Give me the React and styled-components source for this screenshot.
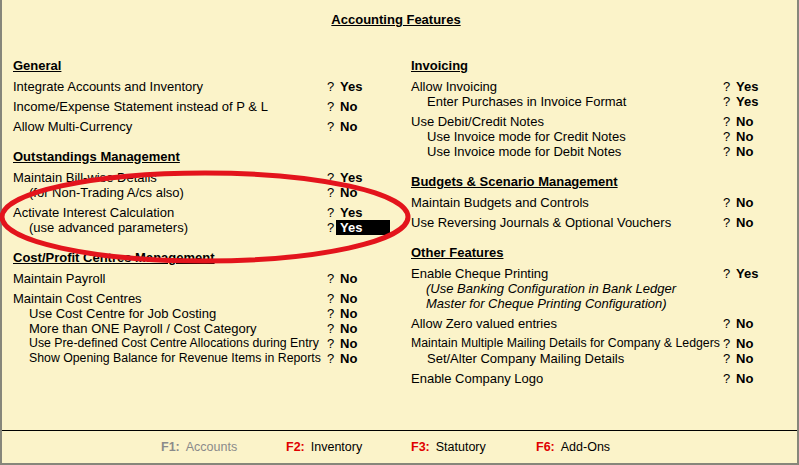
import React from 'react'
import styled, {createGlobalStyle} from 'styled-components'

const Global = createGlobalStyle`
  html, body {
    margin: 0;
    padding: 0;
    background: #fbf3c9;
  }
  body {
    font-family: "Liberation Sans", Arial, sans-serif;
  }
`

const Frame = styled.div`
  position: relative;
  width: 799px;
  height: 465px;
  box-sizing: border-box;
  border-left: 2px solid #86867a;
  border-right: 2px solid #86867a;
  border-bottom: 2px solid #86867a;
  background: #fbf3c9;
  display: flex;
  flex-direction: column;
  color: #000;
`

const Body = styled.div`
  flex: 1;
  padding-top: 12px;
`

const Title = styled.div`
  padding-right: 7px;
  text-align: center;
  font-size: 13px;
  line-height: 16px;
  font-weight: bold;
  text-decoration: underline;
`

const Columns = styled.div`
  display: grid;
  grid-template-columns: 398px 1fr;
  margin-top: 30px;
  padding-left: 11px;
`

const Section = styled.div`
  & + & {
    margin-top: 15px;
  }
`

const Heading = styled.div`
  font-size: 13px;
  line-height: 16px;
  font-weight: bold;
  text-decoration: underline;
`

const Group = styled.div`
  margin-top: 5px;
`

const Row = styled.div`
  display: grid;
  grid-template-columns: ${p => p.$labelWidth}px 9px auto;
  height: 15px;
  line-height: 15px;
  font-size: 13px;
  white-space: nowrap;
`

const Label = styled.span`
  padding-left: ${p => p.$indent}px;
  font-style: ${p => (p.$italic ? 'italic' : 'normal')};
  font-size: ${p => (p.$small ? '12.3px' : '13px')};
`

const Mark = styled.span``

const Value = styled.span`
  width: 54px;
  box-sizing: border-box;
  padding-left: 4px;
  font-weight: bold;
  background: ${p => (p.$hl ? '#000' : 'transparent')};
  color: ${p => (p.$hl ? '#fff' : '#000')};
`

const Footer = styled.div`
  height: 32px;
  border-top: 1px solid #000;
  display: flex;
  align-items: center;
  padding-left: 159px;
  font-size: 12.5px;
`

const FKey = styled.div`
  width: 125px;
  display: flex;
  gap: 6px;
  color: ${p => (p.$off ? '#8a8a8a' : '#000')};
`

const Key = styled.span`
  font-weight: bold;
  color: ${p => (p.$off ? '#8a8a8a' : '#e00000')};
`

const Overlay = styled.svg`
  position: absolute;
  left: -2px;
  top: 0;
  pointer-events: none;
`

const left = [
  {title: 'General', groups: [
    [{t: 'Integrate Accounts and Inventory', v: 'Yes'}],
    [{t: 'Income/Expense Statement instead of P & L', v: 'No'}],
    [{t: 'Allow Multi-Currency', v: 'No'}],
  ]},
  {title: 'Outstandings Management', groups: [
    [{t: 'Maintain Bill-wise Details', v: 'Yes'}, {t: '(for Non-Trading A/cs also)', v: 'No', i: 16}],
    [{t: 'Activate Interest Calculation', v: 'Yes'}, {t: '(use advanced parameters)', v: 'Yes', i: 16, hl: true}],
  ]},
  {title: 'Cost/Profit Centres Management', groups: [
    [{t: 'Maintain Payroll', v: 'No'}],
    [
      {t: 'Maintain Cost Centres', v: 'No'},
      {t: 'Use Cost Centre for Job Costing', v: 'No', i: 16},
      {t: 'More than ONE Payroll / Cost Category', v: 'No', i: 16},
      {t: 'Use Pre-defined Cost Centre Allocations during Entry', v: 'No', i: 16, sm: true},
      {t: 'Show Opening Balance for Revenue Items in Reports', v: 'No', i: 16, sm: true},
    ],
  ]},
]

const right = [
  {title: 'Invoicing', groups: [
    [{t: 'Allow Invoicing', v: 'Yes'}, {t: 'Enter Purchases in Invoice Format', v: 'Yes', i: 16}],
    [
      {t: 'Use Debit/Credit Notes', v: 'No'},
      {t: 'Use Invoice mode for Credit Notes', v: 'No', i: 16},
      {t: 'Use Invoice mode for Debit Notes', v: 'No', i: 16},
    ],
  ]},
  {title: 'Budgets & Scenario Management', groups: [
    [{t: 'Maintain Budgets and Controls', v: 'No'}],
    [{t: 'Use Reversing Journals & Optional Vouchers', v: 'No'}],
  ]},
  {title: 'Other Features', groups: [
    [
      {t: 'Enable Cheque Printing', v: 'Yes'},
      {t: '(Use Banking Configuration in Bank Ledger', i: 15, it: true},
      {t: 'Master for Cheque Printing Configuration)', i: 15, it: true},
    ],
    [{t: 'Allow Zero valued entries', v: 'No'}],
    [
      {t: 'Maintain Multiple Mailing Details for Company & Ledgers', v: 'No', sm: true},
      {t: 'Set/Alter Company Mailing Details', v: 'No', i: 16},
    ],
    [{t: 'Enable Company Logo', v: 'No'}],
  ]},
]

function Column({sections, labelWidth}) {
  return (
    <div>
      {sections.map(s => (
        <Section key={s.title}>
          <Heading>{s.title}</Heading>
          {s.groups.map((g, gi) => (
            <Group key={gi}>
              {g.map(r => (
                <Row key={r.t} $labelWidth={labelWidth}>
                  <Label $indent={r.i || 0} $italic={r.it} $small={r.sm}>{r.t}</Label>
                  <Mark>{r.v ? '?' : ''}</Mark>
                  {r.v ? <Value $hl={r.hl}>{r.v}</Value> : <span />}
                </Row>
              ))}
            </Group>
          ))}
        </Section>
      ))}
    </div>
  )
}

const keys = [
  {k: 'F1:', l: 'Accounts', off: true},
  {k: 'F2:', l: 'Inventory'},
  {k: 'F3:', l: 'Statutory'},
  {k: 'F6:', l: 'Add-Ons'},
]

export default function App() {
  return (
    <Frame>
      <Global />
      <Body>
        <Title>Accounting Features</Title>
        <Columns>
          <Column sections={left} labelWidth={314} />
          <Column sections={right} labelWidth={312} />
        </Columns>
      </Body>
      <Footer>
        {keys.map(f => (
          <FKey key={f.k} $off={f.off}>
            <Key $off={f.off}>{f.k}</Key>
            <span>{f.l}</span>
          </FKey>
        ))}
      </Footer>
      <Overlay width="799" height="465" viewBox="0 0 799 465">
        <ellipse cx="205" cy="217" rx="203" ry="44" fill="none" stroke="#e3141c" strokeWidth="5" />
      </Overlay>
    </Frame>
  )
}
